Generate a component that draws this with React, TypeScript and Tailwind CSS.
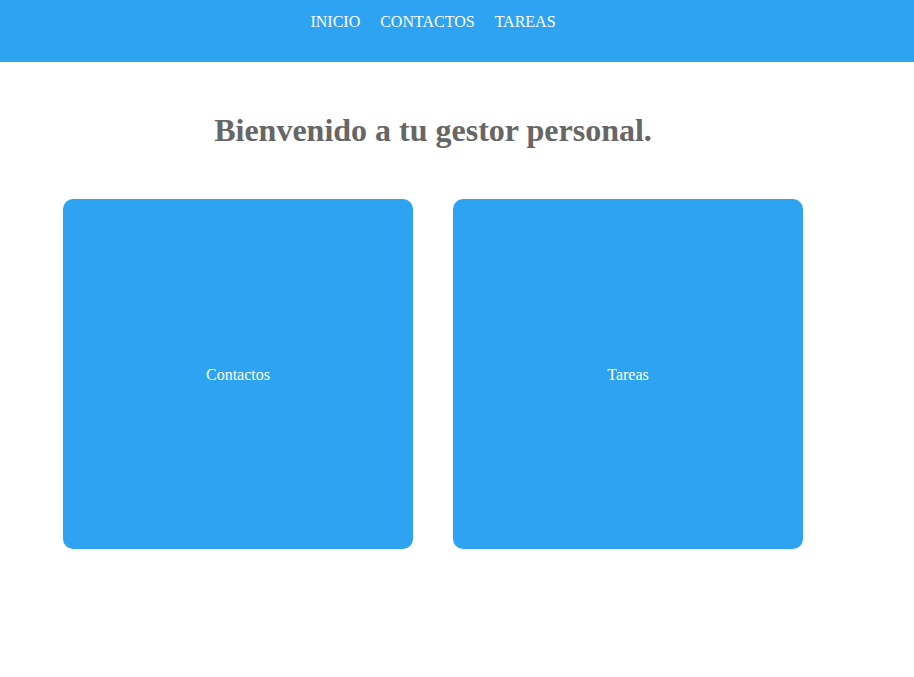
import React from "react";

const serif = { fontFamily: '"Liberation Serif", "Times New Roman", serif' };

export default function App() {
  return (
    <div className="min-h-[677px] bg-white font-['Liberation_Serif',serif]" style={serif}>
      <header className="h-[62px] bg-[#2ea3f2]">
        <nav className="w-[866px] flex justify-center gap-[20px] pt-[13px] text-[16px] leading-[18px] text-white">
          <a className="cursor-pointer">INICIO</a>
          <a className="cursor-pointer">CONTACTOS</a>
          <a className="cursor-pointer">TAREAS</a>
        </nav>
      </header>
      <main className="w-[866px] flex flex-col items-center">
        <h1 className="mt-[50px] text-[32px] leading-[37px] font-bold text-[#666666]">
          Bienvenido a tu gestor personal.
        </h1>
        <div className="mt-[50px] flex gap-[40px]">
          <div className="w-[350px] h-[350px] rounded-[10px] bg-[#2ea3f2] flex items-center justify-center pt-[1px] text-white text-[16px]">
            Contactos
          </div>
          <div className="w-[350px] h-[350px] rounded-[10px] bg-[#2ea3f2] flex items-center justify-center pt-[1px] text-white text-[16px]">
            Tareas
          </div>
        </div>
      </main>
    </div>
  );
}
